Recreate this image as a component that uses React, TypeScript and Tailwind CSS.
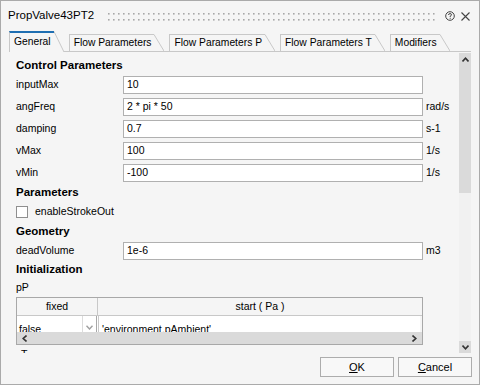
import React from 'react';

const font = "font-['Liberation_Sans',Arial,sans-serif]";

function Tab({ label, active }: { label: string; active?: boolean }) {
  const h = active ? 21 : 17;
  return (
    <div className={`flex items-stretch ${active ? 'h-[21px] -mb-px z-10' : 'h-[17px]'}`}>
      <div
        className={`flex items-center pl-[4px] pr-[3px] border-l border-[#c8c8c8] bg-[#f5f5f5] text-[10.3px] ${
          active ? 'border-t-2 border-t-[#1f6fb2] pb-[1px]' : 'border-t'
        }`}
      >
        {label}
      </div>
      <svg width="10" height={h} className="block">
        <polygon points={`0,0 0.5,0 10,${h} 0,${h}`} fill="#f5f5f5" />
        <line x1="0" y1="0.5" x2="10" y2={h} stroke="#c8c8c8" strokeWidth="1" />
      </svg>
    </div>
  );
}

function Row({ label, value, unit }: { label: string; value: string; unit?: string }) {
  return (
    <div className="flex items-center h-[18px]">
      <div className="w-[107px] text-[10.5px]">{label}</div>
      <div className="w-[300px] h-[18px] border border-[#b0b0b0] bg-white flex items-center pl-[3px] text-[10.5px]">
        {value}
      </div>
      {unit && <div className="ml-[3px] text-[10.5px]">{unit}</div>}
    </div>
  );
}

function Heading({ children, className = '' }: { children: React.ReactNode; className?: string }) {
  return <div className={`h-[16px] flex items-center font-bold text-[11.5px] ${className}`}>{children}</div>;
}

function Chevron({ dir }: { dir: 'up' | 'down' | 'left' | 'right' }) {
  const rot = { up: 0, down: 180, left: 270, right: 90 }[dir];
  return (
    <svg width="7" height="5" viewBox="0 0 7 5" style={{ transform: `rotate(${rot}deg)` }}>
      <path d="M0.5 4.5 L3.5 1.2 L6.5 4.5" fill="none" stroke="#333" strokeWidth="1.6" />
    </svg>
  );
}

export default function App() {
  return (
    <div className={`w-[480px] h-[385px] bg-[#f5f5f5] border border-[#aaaaaa] flex flex-col overflow-hidden text-black ${font}`}>
      {/* Title bar */}
      <div className="h-[30px] flex items-center pl-[7px] pr-[9px] shrink-0">
        <span className="text-[11.5px]">PropValve43PT2</span>
        <svg className="ml-[14px] flex-1 h-[9px]">
          <defs>
            <pattern id="grip" width="5" height="6" patternUnits="userSpaceOnUse">
              <rect x="0" y="1" width="1.6" height="1.6" fill="#a8a8a8" />
            </pattern>
          </defs>
          <rect width="100%" height="9" fill="url(#grip)" />
        </svg>
        <svg width="10" height="10" viewBox="0 0 10 10" className="ml-[10px]">
          <circle cx="5" cy="5" r="4.3" fill="none" stroke="#444" strokeWidth="1" />
          <path d="M3.5 4 Q3.6 2.6 5 2.6 Q6.5 2.6 6.5 3.8 Q6.5 4.6 5.2 5.1 L5.2 6" fill="none" stroke="#444" strokeWidth="1" />
          <rect x="4.7" y="6.8" width="1" height="1" fill="#444" />
        </svg>
        <svg width="9" height="9" viewBox="0 0 9 9" className="ml-[6px]">
          <path d="M0.5 0.5 L8.5 8.5 M8.5 0.5 L0.5 8.5" stroke="#444" strokeWidth="1.1" />
        </svg>
      </div>

      {/* Tabs */}
      <div className="h-[21px] mx-[8px] flex items-end gap-[5px] border-b border-[#c8c8c8] shrink-0">
        <Tab label="General" active />
        <Tab label="Flow Parameters" />
        <Tab label="Flow Parameters P" />
        <Tab label="Flow Parameters T" />
        <Tab label="Modifiers" />
      </div>

      {/* Content */}
      <div className="h-[301px] ml-[8px] mr-[8px] flex shrink-0">
        <div className="flex-1 pl-[7px] overflow-hidden">
          <Heading className="mt-[6px]">Control Parameters</Heading>
          <div className="mt-[2px] flex flex-col gap-[4px]">
            <Row label="inputMax" value="10" />
            <Row label="angFreq" value="2 * pi * 50" unit="rad/s" />
            <Row label="damping" value="0.7" unit="s-1" />
            <Row label="vMax" value="100" unit="1/s" />
            <Row label="vMin" value="-100" unit="1/s" />
          </div>
          <Heading className="mt-[3px]">Parameters</Heading>
          <div className="mt-[3px] h-[16px] flex items-center">
            <div className="w-[12px] h-[12px] border border-[#8f8f8f] bg-white" />
            <span className="ml-[7px] text-[10.5px]">enableStrokeOut</span>
          </div>
          <Heading className="mt-[4px]">Geometry</Heading>
          <div className="mt-[2px]">
            <Row label="deadVolume" value="1e-6" unit="m3" />
          </div>
          <Heading className="mt-[2px]">Initialization</Heading>
          <div className="mt-[2px] h-[16px] flex items-center text-[10.5px]">pP</div>
          {/* Table */}
          <div className="mt-[1px] w-[407px] border border-[#a8a8a8] bg-[#f5f5f5]">
            <div className="h-[18px] flex border-b border-[#c8c8c8] text-[10.5px]">
              <div className="w-[81px] border-r border-[#c8c8c8] flex items-center justify-center">fixed</div>
              <div className="flex-1 flex items-center justify-center">start ( Pa )</div>
            </div>
            <div className="h-[16px] overflow-hidden">
              <div className="h-[27px] flex bg-white text-[10.5px] mr-[2px]">
                <div className="w-[66px] border-r border-[#dcdcdc] flex items-center pl-[2px]">false</div>
                <div className="w-[14px] flex items-start pt-[9px] justify-center border-r border-[#a8a8a8]">
                  <svg width="7" height="5" viewBox="0 0 7 5">
                    <path d="M0.5 0.8 L3.5 4 L6.5 0.8" fill="none" stroke="#a0a0a0" strokeWidth="1.4" />
                  </svg>
                </div>
                <div className="flex-1 flex items-center pl-[3px] border-l border-[#c8c8c8] ml-[1px]">'environment.pAmbient'</div>
              </div>
            </div>
            <div className="h-[12px] bg-[#dadada] flex items-center justify-between px-[4px]">
              <Chevron dir="left" />
              <Chevron dir="right" />
            </div>
          </div>
          <div className="mt-[2px] h-[16px] flex items-center pl-[5px] text-[10.5px]">T</div>
        </div>

        {/* Vertical scrollbar */}
        <div className="w-[12px] mt-[1px] flex flex-col">
          <div className="h-[140px] bg-[#dadada] flex justify-center pt-[4px]">
            <Chevron dir="up" />
          </div>
          <div className="flex-1 bg-[#f1f1f1]" />
          <div className="h-[12px] bg-[#dadada] flex items-center justify-center">
            <Chevron dir="down" />
          </div>
        </div>
      </div>

      {/* Footer */}
      <div className="flex justify-end gap-[4px] pr-[7px] mt-[4px]">
        <button className="w-[74px] h-[20px] border border-[#adadad] bg-[#f8f8f8] text-[11px]">
          <span className="underline">O</span>K
        </button>
        <button className="w-[74px] h-[20px] border border-[#adadad] bg-[#f8f8f8] text-[11px]">
          <span className="underline">C</span>ancel
        </button>
      </div>
    </div>
  );
}
